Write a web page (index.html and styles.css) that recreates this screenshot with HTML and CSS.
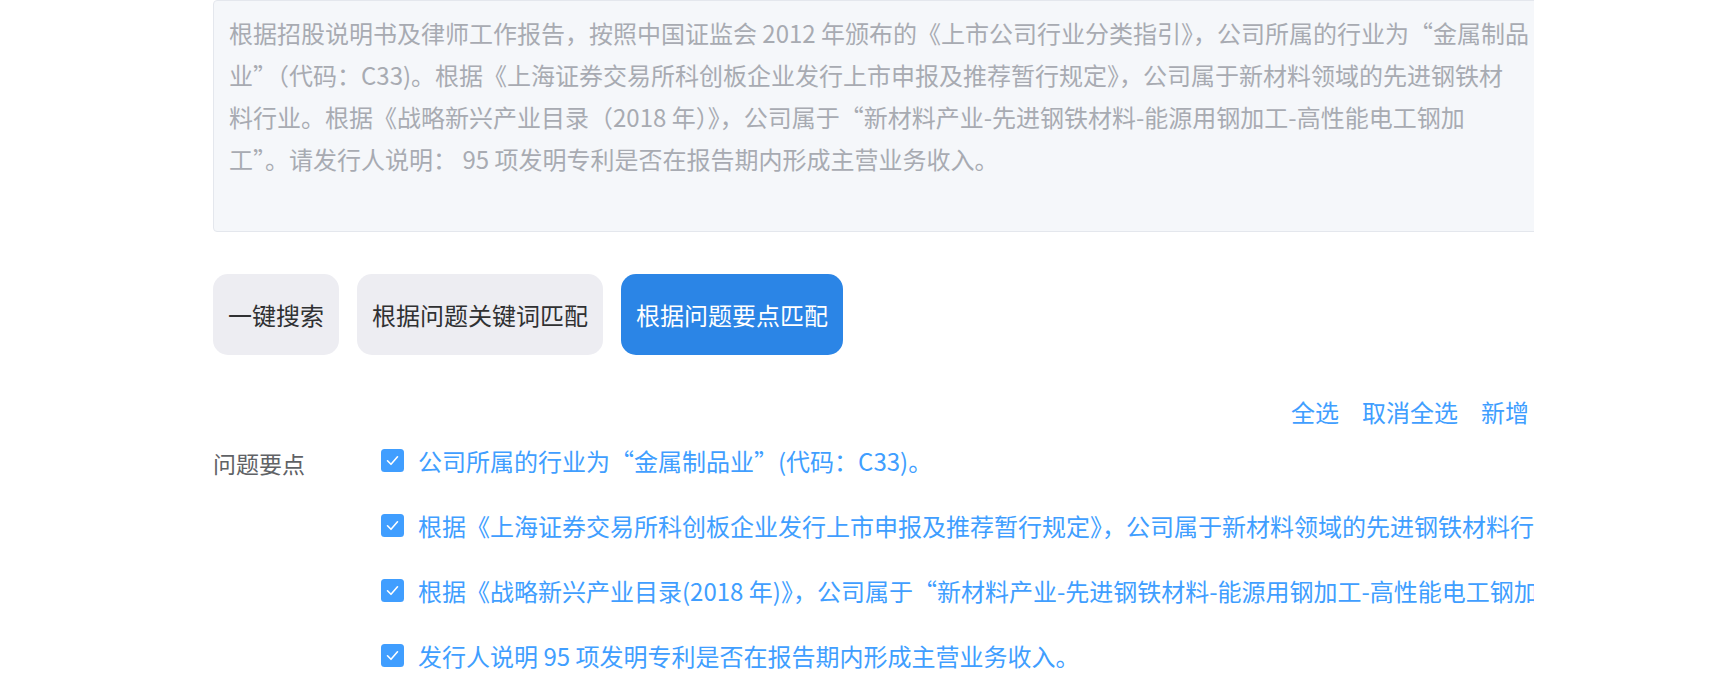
FILE: index.html
```html
<!DOCTYPE html>
<html lang="zh-CN">
<head>
<meta charset="utf-8">
<title>问题要点匹配</title>
<link rel="stylesheet" href="styles.css">
</head>
<body>
<div class="page">
  <div class="question-box">根据招股说明书及律师工作报告，按照中国证监会 2012 年颁布的《上市公司行业分类指引》，公司所属的行业为“金属制品<br>业”（代码：C33)。根据《上海证券交易所科创板企业发行上市申报及推荐暂行规定》，公司属于新材料领域的先进钢铁材<br>料行业。根据《战略新兴产业目录（2018 年）》，公司属于“新材料产业-先进钢铁材料-能源用钢加工-高性能电工钢加<br>工”。请发行人说明： 95 项发明专利是否在报告期内形成主营业务收入。</div>

  <div class="actions">
    <button class="btn">一键搜索</button>
    <button class="btn">根据问题关键词匹配</button>
    <button class="btn btn-primary">根据问题要点匹配</button>
  </div>

  <div class="toolbar">
    <a class="link">全选</a>
    <a class="link">取消全选</a>
    <a class="link">新增</a>
  </div>

  <div class="points">
    <div class="points-label">问题要点</div>
    <ul class="points-list">
      <li class="point">
        <svg class="check" viewBox="0 0 23 23" width="23" height="23"><rect x="0" y="0" width="23" height="23" rx="3.5" fill="#409eff"/><polyline points="6.5,11.8 10,15.3 16.5,7.8" fill="none" stroke="#fff" stroke-width="1.6" stroke-linecap="round" stroke-linejoin="round"/></svg>
        <span class="point-text">公司所属的行业为“金属制品业”(代码：C33)。</span>
      </li>
      <li class="point">
        <svg class="check" viewBox="0 0 23 23" width="23" height="23"><rect x="0" y="0" width="23" height="23" rx="3.5" fill="#409eff"/><polyline points="6.5,11.8 10,15.3 16.5,7.8" fill="none" stroke="#fff" stroke-width="1.6" stroke-linecap="round" stroke-linejoin="round"/></svg>
        <span class="point-text">根据《上海证券交易所科创板企业发行上市申报及推荐暂行规定》，公司属于新材料领域的先进钢铁材料行业。</span>
      </li>
      <li class="point">
        <svg class="check" viewBox="0 0 23 23" width="23" height="23"><rect x="0" y="0" width="23" height="23" rx="3.5" fill="#409eff"/><polyline points="6.5,11.8 10,15.3 16.5,7.8" fill="none" stroke="#fff" stroke-width="1.6" stroke-linecap="round" stroke-linejoin="round"/></svg>
        <span class="point-text">根据《战略新兴产业目录(2018 年)》，公司属于“新材料产业-先进钢铁材料-能源用钢加工-高性能电工钢加工”。</span>
      </li>
      <li class="point">
        <svg class="check" viewBox="0 0 23 23" width="23" height="23"><rect x="0" y="0" width="23" height="23" rx="3.5" fill="#409eff"/><polyline points="6.5,11.8 10,15.3 16.5,7.8" fill="none" stroke="#fff" stroke-width="1.6" stroke-linecap="round" stroke-linejoin="round"/></svg>
        <span class="point-text">发行人说明 95 项发明专利是否在报告期内形成主营业务收入。</span>
      </li>
    </ul>
  </div>
</div>
</body>
</html>
```

FILE: styles.css
```css
* { box-sizing: border-box; }

html, body {
  margin: 0;
  padding: 0;
  background: #ffffff;
}

body {
  font-family: "Noto Sans CJK SC", "Noto Sans", "Liberation Sans", sans-serif;
  color: #303133;
}

.page {
  margin-left: 213px;
  width: 1321px;
  overflow: hidden;
  height: 683px;
}

.question-box {
  width: 1380px;
  height: 232px;
  margin-right: -59px;
  padding: 11px 15px;
  background: #f5f7fa;
  border: 1px solid #e4e7ed;
  border-radius: 4px;
  color: #a8abb2;
  font-size: 24px;
  line-height: 42px;
  white-space: nowrap;
  overflow: hidden;
}

.actions {
  display: flex;
  gap: 18px;
  margin-top: 42px;
}

.btn {
  font-family: inherit;
  font-size: 24px;
  line-height: 33px;
  padding: 24px 15px;
  border: none;
  border-radius: 15px;
  background: #ededf2;
  color: #303133;
  cursor: pointer;
}

.btn-primary {
  background: #2b85e6;
  color: #ffffff;
}

.toolbar {
  display: flex;
  justify-content: flex-end;
  gap: 23px;
  margin-top: 40px;
  padding-right: 5px;
}

.link {
  font-size: 24px;
  line-height: 33px;
  color: #409eff;
  cursor: pointer;
}

.points {
  display: grid;
  grid-template-columns: 168px 1fr;
}

.points-label {
  font-size: 23px;
  line-height: 65px;
  padding-top: 3px;
  color: #606266;
}

.points-list {
  list-style: none;
  margin: 0;
  padding: 0;
  min-width: 0;
}

.point {
  display: flex;
  align-items: center;
  gap: 14px;
  height: 65px;
  white-space: nowrap;
  overflow: hidden;
}

.check {
  flex: none;
  display: block;
}

.point-text {
  font-size: 24px;
  line-height: 33px;
  color: #409eff;
}
```
